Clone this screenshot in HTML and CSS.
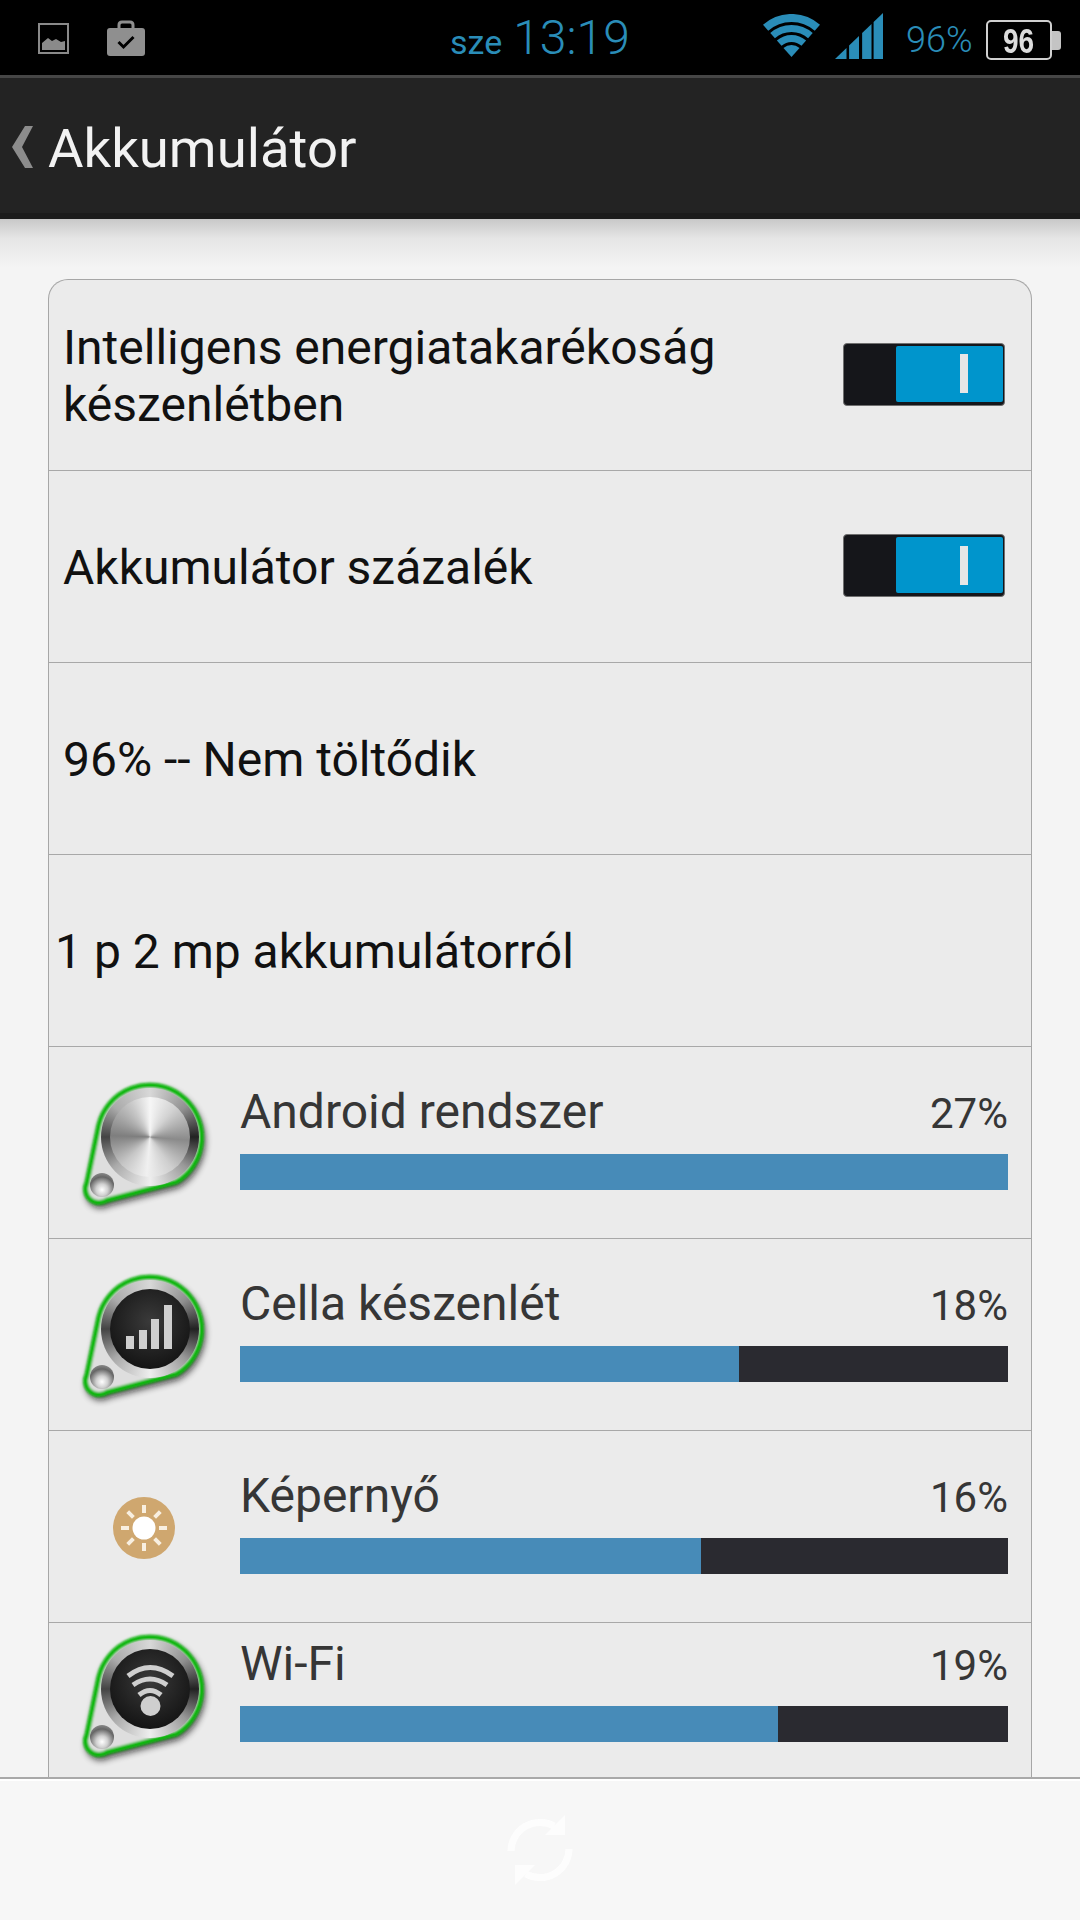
FILE: index.html
```html
<!DOCTYPE html>
<html lang="hu">
<head>
    <meta charset="UTF-8">
    <meta name="viewport" content="width=device-width, initial-scale=1.0">
    <title>Akkumulátor</title>
    <link rel="stylesheet" href="styles.css">
</head>
<body>
    <!-- Status bar -->
    <div class="status-bar">
        <div class="status-left">
            <svg class="icon-image" width="31" height="31" viewBox="0 0 31 31">
                <rect x="1" y="1" width="29" height="29" fill="none" stroke="#8a8a8a" stroke-width="2"/>
                <path d="M4 27V20L10 15L14 18L18 16L23 19L27 18V27Z" fill="#8a8a8a"/>
            </svg>
            <svg class="icon-case" width="38" height="36" viewBox="0 0 38 36">
                <path d="M12 10V5Q12 2 15 2H23Q26 2 26 5V10" fill="none" stroke="#8f8f8f" stroke-width="3"/>
                <rect x="0" y="8" width="38" height="28" rx="3" fill="#8f8f8f"/>
                <path d="M11.5 22L16.5 27L26.5 17" fill="none" stroke="#000" stroke-width="3"/>
            </svg>
        </div>
        <div class="status-clock"><span class="clock-date">sze</span><span class="clock-time">13:19</span></div>
        <div class="status-right">
            <svg class="icon-wifi" width="57" height="43" viewBox="0 0 57 43" fill="none" stroke="#2a8db8">
                <path d="M2.6 13.8A39 39 0 0 1 54.4 13.8" stroke-width="8"/>
                <path d="M9.6 21.7A28.5 28.5 0 0 1 47.4 21.7" stroke-width="7"/>
                <path d="M16.2 29.1A18.5 18.5 0 0 1 40.8 29.1" stroke-width="7"/>
                <path d="M28.5 43L20.5 34A12 12 0 0 1 36.5 34Z" fill="#2a8db8" stroke="none"/>
            </svg>
            <svg class="icon-signal" width="48" height="47" viewBox="0 0 46 47" preserveAspectRatio="none" fill="#2a8db8">
                <polygon points="0,47 11,36 11,47"/>
                <polygon points="13.5,47 13.5,33.5 23,24 23,47"/>
                <polygon points="26,47 26,21 35,12 35,47"/>
                <polygon points="37,47 37,10 46,1 46,47"/>
            </svg>
            <span class="status-percent">96%</span>
            <div class="battery">
                <div class="battery-body"><span class="battery-level">96</span></div>
                <div class="battery-nub"></div>
            </div>
        </div>
    </div>

    <!-- Action bar -->
    <div class="action-bar">
        <svg class="back-arrow" width="22" height="42" viewBox="0 0 22 42">
            <polygon points="13,0 21,0 10,21 21,42 13,42 0,21" fill="#8c8c8c"/>
        </svg>
        <span class="action-title">Akkumulátor</span>
    </div>

    <div class="content">
        <div class="card">
            <div class="row row-first">
                <div class="row-text">Intelligens energiatakarékoság<br>készenlétben</div>
                <div class="toggle"><div class="toggle-on"><div class="toggle-mark"></div></div></div>
            </div>
            <div class="row">
                <div class="row-text">Akkumulátor százalék</div>
                <div class="toggle"><div class="toggle-on"><div class="toggle-mark"></div></div></div>
            </div>
            <div class="row">
                <div class="row-text">96% -- Nem töltődik</div>
            </div>
            <div class="row">
                <div class="row-text row-text-out">1 p 2 mp akkumulátorról</div>
            </div>

            <div class="row usage-row">
                <div class="app-icon">
                    <svg class="pin" width="130" height="140" viewBox="0 0 130 140">
                        <use href="#pin-shape"/>
                    </svg>
                    <div class="dial"><div class="dial-face dial-metal"></div></div>
                    <div class="ball"></div>
                </div>
                <div class="usage-info">
                    <div class="usage-head"><span class="usage-name">Android rendszer</span><span class="usage-pct">27%</span></div>
                    <div class="usage-bar"><div class="usage-fill" style="width: 100%"></div></div>
                </div>
            </div>

            <div class="row usage-row">
                <div class="app-icon">
                    <svg class="pin" width="130" height="140" viewBox="0 0 130 140">
                        <use href="#pin-shape"/>
                    </svg>
                    <div class="dial">
                        <div class="dial-face dial-dark">
                            <svg width="80" height="80" viewBox="0 0 80 80" fill="#cfcfcf">
                                <rect x="16" y="47" width="8" height="13"/>
                                <rect x="29" y="41" width="8" height="19"/>
                                <rect x="41" y="30" width="8" height="30"/>
                                <rect x="54" y="16" width="8" height="44"/>
                            </svg>
                        </div>
                    </div>
                    <div class="ball"></div>
                </div>
                <div class="usage-info">
                    <div class="usage-head"><span class="usage-name">Cella készenlét</span><span class="usage-pct">18%</span></div>
                    <div class="usage-bar"><div class="usage-fill" style="width: 65%"></div></div>
                </div>
            </div>

            <div class="row usage-row">
                <div class="sun-icon">
                    <svg width="62" height="62" viewBox="0 0 62 62">
                        <circle cx="31" cy="31" r="31" fill="#cfa76f"/>
                        <circle cx="31" cy="31" r="11.5" fill="#fff"/>
                        <g stroke="#f8efe0" stroke-width="4">
                            <path d="M31 8V16M31 46V54M8 31H16M46 31H54M14.7 14.7L20.4 20.4M41.6 41.6L47.3 47.3M14.7 47.3L20.4 41.6M41.6 20.4L47.3 14.7"/>
                        </g>
                    </svg>
                </div>
                <div class="usage-info">
                    <div class="usage-head"><span class="usage-name">Képernyő</span><span class="usage-pct">16%</span></div>
                    <div class="usage-bar"><div class="usage-fill" style="width: 60%"></div></div>
                </div>
            </div>

            <div class="row usage-row usage-row-up">
                <div class="app-icon">
                    <svg class="pin" width="130" height="140" viewBox="0 0 130 140">
                        <use href="#pin-shape"/>
                    </svg>
                    <div class="dial">
                        <div class="dial-face dial-dark">
                            <svg width="80" height="80" viewBox="0 0 80 80" fill="none" stroke="#cfcfcf" stroke-width="5">
                                <path d="M18 27Q40 10 63 27"/>
                                <path d="M23 36Q40 24 57 36"/>
                                <path d="M29 46Q40 37 51 46"/>
                                <circle cx="40.5" cy="57" r="10" fill="#cfcfcf" stroke="none"/>
                            </svg>
                        </div>
                    </div>
                    <div class="ball"></div>
                </div>
                <div class="usage-info">
                    <div class="usage-head"><span class="usage-name">Wi-Fi</span><span class="usage-pct">19%</span></div>
                    <div class="usage-bar"><div class="usage-fill" style="width: 70%"></div></div>
                </div>
            </div>
        </div>
    </div>

    <!-- Bottom bar -->
    <div class="bottom-bar">
        <svg class="refresh" width="80" height="80" viewBox="0 0 80 80" fill="#fff">
            <path d="M11 41A29 29 0 0 1 54 16" fill="none" stroke="#fff" stroke-width="7"/>
            <polygon points="65,5 65,25 45,25"/>
            <path d="M69 39A29 29 0 0 1 26 64" fill="none" stroke="#fff" stroke-width="7"/>
            <polygon points="15,75 15,55 35,55"/>
        </svg>
    </div>

    <!-- Shared outline of the usage icons -->
    <svg class="defs" width="0" height="0">
        <defs>
            <filter id="pin-blur" x="-20%" y="-20%" width="140%" height="140%">
                <feGaussianBlur stdDeviation="3.5"/>
            </filter>
            <filter id="pin-soft" x="-5%" y="-5%" width="110%" height="110%">
                <feGaussianBlur stdDeviation="0.8"/>
            </filter>
            <g id="pin-shape">
                <path d="M19 50A52 52 0 1 1 96 107L27 125A13.5 13.5 0 0 1 7 108Z" transform="translate(2 4)" fill="#111" stroke="#111" stroke-width="3" opacity="0.75" filter="url(#pin-blur)"/>
                <path d="M19 50A52 52 0 1 1 96 107L27 125A13.5 13.5 0 0 1 7 108Z" fill="#dedede" stroke="#08b808" stroke-width="5" filter="url(#pin-soft)"/>
            </g>
        </defs>
    </svg>
</body>
</html>
```

FILE: styles.css
```css
* {
    box-sizing: border-box;
}

body {
    margin: 0;
    width: 1080px;
    height: 1920px;
    display: flex;
    flex-direction: column;
    overflow: hidden;
    font-family: 'Roboto', sans-serif;
    background: #f4f4f4;
}

/* Status bar */
.status-bar {
    height: 78px;
    flex-shrink: 0;
    display: flex;
    align-items: flex-start;
    background: #000;
    border-bottom: 3px solid #464646;
    color: #2a8db8;
}

.status-left {
    width: 450px;
    padding: 20px 0 0 38px;
    display: flex;
    align-items: flex-start;
    gap: 38px;
}

.icon-image {
    margin-top: 3px;
}

.status-clock {
    width: 180px;
    height: 75px;
    line-height: 76px;
    white-space: nowrap;
    font-weight: 300;
}

.clock-date {
    margin-right: 11px;
    font-size: 34px;
    font-weight: 400;
}

.clock-time {
    font-size: 48px;
}

.status-right {
    flex: 1;
    padding: 12px 0 0 133px;
    display: flex;
    align-items: flex-start;
}

.icon-wifi {
    margin-top: 2px;
}

.icon-signal {
    margin-left: 15px;
}

.status-percent {
    margin-left: 23px;
    font-size: 36px;
    line-height: 42px;
    margin-top: 7px;
    font-weight: 300;
}

.battery {
    margin-left: 13px;
    margin-top: 8px;
    display: flex;
    align-items: center;
}

.battery-body {
    width: 66px;
    height: 40px;
    border: 2px solid #d0d0d0;
    border-radius: 5px;
    color: #dcdcdc;
    font-family: 'Liberation Sans', sans-serif;
    font-weight: bold;
    font-size: 35px;
    line-height: 37px;
    text-align: center;
}

.battery-level {
    display: inline-block;
    transform: scaleX(0.8);
}

.battery-nub {
    width: 9px;
    height: 19px;
    background: #c4c4c4;
    border-radius: 0 3px 3px 0;
}

/* Action bar */
.action-bar {
    height: 141px;
    flex-shrink: 0;
    display: flex;
    align-items: center;
    padding-left: 12px;
    background: #232323;
    border-bottom: 6px solid #1c1c1c;
}

.back-arrow {
    margin-top: 3px;
}

.action-title {
    margin-left: 14px;
    margin-top: 4px;
    font-size: 54.5px;
    color: #f2f2f2;
}

/* Main list */
.content {
    flex: 1;
    min-height: 0;
    overflow: hidden;
    padding: 60px 48px 0;
    background: linear-gradient(#c8c8c8 0, #e6e6e6 20px, #f4f4f4 48px) no-repeat;
}

.card {
    background: #ebebeb;
    border: 1px solid #a6a6a6;
    border-bottom: none;
    border-radius: 20px 20px 0 0;
    min-height: 1500px;
}

.row {
    height: 192px;
    display: flex;
    align-items: center;
    justify-content: space-between;
    padding: 0 26px 0 14px;
    border-bottom: 1px solid #a8a8a8;
}

.row-first {
    height: 191px;
}

.row-text {
    margin-top: 2px;
    font-size: 48px;
    line-height: 57px;
    color: #111;
}

.row-text-out {
    margin-left: -8px;
}

/* Toggle */
.toggle {
    width: 162px;
    height: 63px;
    margin-top: -2px;
    padding: 2px 1px 3px 52px;
    background: #15161a;
    border: 1px solid #6f6f6f;
    border-radius: 4px;
}

.toggle-on {
    height: 100%;
    display: flex;
    align-items: center;
    justify-content: center;
    padding-left: 28px;
    background: #0095cc;
    border-radius: 2px;
}

.toggle-mark {
    width: 8px;
    height: 39px;
    background: #e6e6e6;
}

/* Usage rows */
.usage-row {
    align-items: flex-start;
    justify-content: flex-start;
    padding: 0 23px 0 0;
}

.app-icon {
    position: relative;
    width: 130px;
    height: 140px;
    margin: 28px 0 0 31px;
    flex-shrink: 0;
}

.pin {
    position: absolute;
    top: 0;
    left: 0;
    overflow: visible;
}

.dial {
    position: absolute;
    top: 13px;
    left: 21px;
    width: 98px;
    height: 98px;
    padding: 9px;
    border-radius: 50%;
    background: conic-gradient(#d8d8d8 0deg, #909090 50deg, #222 90deg, #999 130deg, #eee 180deg, #aaa 230deg, #444 270deg, #aaa 310deg, #d8d8d8 360deg);
}

.dial-face {
    width: 80px;
    height: 80px;
    border-radius: 50%;
}

.dial-metal {
    background: conic-gradient(#f6f6f6 0deg, #d2d2d2 40deg, #8a8a8a 95deg, #cfcfcf 145deg, #f0f0f0 185deg, #c6c6c6 225deg, #7e7e7e 272deg, #c8c8c8 330deg, #f6f6f6 360deg);
}

.dial-dark {
    background: radial-gradient(circle at 50% 40%, #3a3a3a, #151515 75%);
}

.ball {
    position: absolute;
    top: 98px;
    left: 10px;
    width: 24px;
    height: 24px;
    border-radius: 50%;
    background: radial-gradient(circle at 50% 70%, #fff 0, #d0d0d0 28%, #666 62%, #a8a8a8 100%);
}

.sun-icon {
    width: 62px;
    height: 62px;
    margin: 66px 0 0 64px;
    flex-shrink: 0;
}

.usage-row .sun-icon + .usage-info {
    margin-left: 65px;
}

.usage-info {
    flex: 1;
    margin-left: 30px;
    padding-top: 32px;
}

.usage-head {
    height: 75px;
    padding-top: 4px;
    display: flex;
    justify-content: space-between;
    align-items: baseline;
    color: #363636;
}

.usage-name {
    font-size: 48px;
}

.usage-pct {
    font-size: 42px;
}

.usage-bar {
    height: 36px;
    background: #2a2a30;
}

.usage-fill {
    height: 100%;
    background: #478bb8;
}

.usage-row-up .app-icon {
    margin-top: 4px;
}

.usage-row-up .usage-info {
    padding-top: 8px;
}

/* Bottom bar */
.bottom-bar {
    height: 143px;
    flex-shrink: 0;
    display: flex;
    align-items: center;
    justify-content: center;
    background: #f7f7f7;
    border-top: 2px solid #a9a9a9;
    box-shadow: inset 0 2px 0 #fff;
}

.refresh {
    opacity: 0.85;
}

.defs {
    position: absolute;
}
```
